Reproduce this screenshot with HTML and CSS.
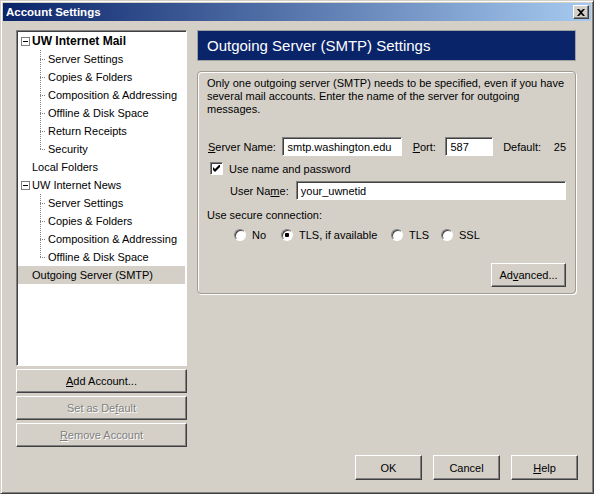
FILE: index.html
```html
<!DOCTYPE html>
<html lang="en">
<head>
    <meta charset="UTF-8">
    <title>Account Settings</title>
    <link rel="stylesheet" href="styles.css">
</head>
<body>

<div class="window">
    <div class="titlebar">
        <span class="title">Account Settings</span>
        <span class="close">
            <svg width="8" height="7" viewBox="0 0 8 7"><path d="M0 0h2l2 2 2-2h2L5 3.5 8 7H6L4 5 2 7H0l3-3.5z" fill="#000"/></svg>
        </span>
    </div>

    <div class="content">
        <div class="main">
            <!-- Account tree and its buttons -->
            <div class="sidebar">
                <div class="tree">
                    <div class="row parent bold"><span class="expander"></span>UW Internet Mail</div>
                    <div class="row child">Server Settings</div>
                    <div class="row child">Copies &amp; Folders</div>
                    <div class="row child">Composition &amp; Addressing</div>
                    <div class="row child">Offline &amp; Disk Space</div>
                    <div class="row child">Return Receipts</div>
                    <div class="row child last">Security</div>
                    <div class="row parent plain">Local Folders</div>
                    <div class="row parent"><span class="expander"></span>UW Internet News</div>
                    <div class="row child">Server Settings</div>
                    <div class="row child">Copies &amp; Folders</div>
                    <div class="row child">Composition &amp; Addressing</div>
                    <div class="row child last">Offline &amp; Disk Space</div>
                    <div class="row parent plain selected">Outgoing Server (SMTP)</div>
                </div>
                <div class="btn side-btn"><u>A</u>dd Account...</div>
                <div class="btn side-btn disabled">Set as De<u>f</u>ault</div>
                <div class="btn side-btn disabled"><u>R</u>emove Account</div>
            </div>

            <!-- Settings page -->
            <div class="panel">
                <div class="panel-header">Outgoing Server (SMTP) Settings</div>
                <div class="group">
                    <p class="description">Only one outgoing server (SMTP) needs to be specified, even if you have several mail accounts. Enter the name of the server for outgoing messages.</p>

                    <div class="form-row server-row">
                        <span class="label server-label"><u>S</u>erver Name:</span>
                        <span class="field server-field">smtp.washington.edu</span>
                        <span class="label port-label"><u>P</u>ort:</span>
                        <span class="field port-field">587</span>
                        <span class="label default-label">Default:</span>
                        <span>25</span>
                    </div>

                    <div class="form-row check-row">
                        <span class="checkbox">
                            <svg width="7" height="7" viewBox="0 0 7 7"><path d="M0 2v3l2 2 5-5V-1L2 4z" fill="#000"/></svg>
                        </span>
                        <span>Use name and password</span>
                    </div>

                    <div class="form-row user-row">
                        <span class="label user-label">User Na<u>m</u>e:</span>
                        <span class="field user-field">your_uwnetid</span>
                    </div>

                    <div class="secure-label">Use secure connection:</div>

                    <div class="form-row radio-row">
                        <span class="radio-item item-no"><span class="radio"></span>No</span>
                        <span class="radio-item item-tlsif"><span class="radio checked"></span>TLS, if available</span>
                        <span class="radio-item item-tls"><span class="radio"></span>TLS</span>
                        <span class="radio-item"><span class="radio"></span>SSL</span>
                    </div>

                    <div class="advanced-row">
                        <div class="btn advanced-btn">Ad<u>v</u>anced...</div>
                    </div>
                </div>
            </div>
        </div>

        <div class="footer">
            <div class="btn footer-btn">OK</div>
            <div class="btn footer-btn">Cancel</div>
            <div class="btn footer-btn"><u>H</u>elp</div>
        </div>
    </div>
</div>

</body>
</html>
```

FILE: styles.css
```css
/* Classic dialog look */
body {
    margin: 0;
    font-family: "Liberation Sans", Arial, sans-serif;
    font-size: 11px;
    color: #000;
    background-color: #d4d0c8;
}
.window {
    width: 594px;
    height: 494px;
    box-sizing: border-box;
    background-color: #d4d0c8;
    border: 1px solid;
    border-color: #d4d0c8 #404040 #404040 #d4d0c8;
    box-shadow: inset 1px 1px #fff, inset -1px -1px #808080;
    padding: 2px;
    display: flex;
    flex-direction: column;
}
.titlebar {
    height: 18px;
    background: linear-gradient(to right, #0a246a, #a6caf0);
    display: flex;
    align-items: center;
    justify-content: space-between;
    padding: 0 2px 0 3px;
}
.title {
    color: #fff;
    font-weight: bold;
    font-size: 11.5px;
}
.close {
    width: 16px;
    height: 14px;
    box-sizing: border-box;
    background-color: #d4d0c8;
    border: 1px solid;
    border-color: #fff #404040 #404040 #fff;
    box-shadow: inset -1px -1px #808080;
    display: flex;
    align-items: center;
    justify-content: center;
}
.content {
    padding: 9px 13px 0 13px;
}
.main {
    display: flex;
    gap: 10px;
}

/* Left column */
.sidebar {
    width: 171px;
    display: flex;
    flex-direction: column;
    gap: 3px;
}
.tree {
    height: 336px;
    box-sizing: border-box;
    background-color: #fff;
    border: 1px solid;
    border-color: #808080 #fff #fff #808080;
    box-shadow: inset 1px 1px #404040;
    padding: 1px 1px 0 1px;
}
.row {
    height: 18px;
    line-height: 18px;
    white-space: nowrap;
}
.parent {
    display: flex;
    align-items: center;
    padding-left: 3px;
}
.bold {
    font-weight: bold;
    font-size: 12px;
}
.plain {
    padding-left: 14px;
}
.selected {
    background-color: #d4d0c8;
}
.expander {
    width: 9px;
    height: 9px;
    box-sizing: border-box;
    border: 1px solid #808080;
    margin-right: 2px;
    background: linear-gradient(#000, #000) center / 5px 1px no-repeat #fff;
}
.child {
    padding-left: 30px;
    background-image:
        repeating-linear-gradient(to bottom, #808080 0 1px, transparent 1px 2px),
        repeating-linear-gradient(to right, #808080 0 1px, transparent 1px 2px);
    background-size: 1px 18px, 6px 1px;
    background-position: 22px 0, 22px 9px;
    background-repeat: no-repeat;
}
.child.last {
    background-size: 1px 10px, 6px 1px;
}

/* Buttons */
.btn {
    height: 24px;
    box-sizing: border-box;
    background-color: #d4d0c8;
    border: 1px solid;
    border-color: #fff #404040 #404040 #fff;
    box-shadow: inset -1px -1px #808080;
    display: flex;
    align-items: center;
    justify-content: center;
    white-space: nowrap;
}
.disabled {
    color: #808080;
    text-shadow: 1px 1px #fff;
}

/* Right column */
.panel {
    width: 379px;
}
.panel-header {
    height: 31px;
    box-sizing: border-box;
    background-color: #0a246a;
    border: 1px solid #a0a0a0;
    color: #fff;
    font-size: 15px;
    display: flex;
    align-items: center;
    padding-left: 9px;
}
.group {
    margin-top: 10px;
    height: 223px;
    box-sizing: border-box;
    border: 1px solid #a09c94;
    border-radius: 4px;
    box-shadow: inset 1px 1px #fff, 1px 1px #fff;
    padding: 5px 9px 0 9px;
}
.description {
    margin: 0;
    line-height: 13px;
}
.form-row {
    display: flex;
    align-items: center;
}
.field {
    height: 19px;
    box-sizing: border-box;
    background-color: #fff;
    border: 1px solid;
    border-color: #808080 #fff #fff #808080;
    box-shadow: inset 1px 1px #404040;
    display: flex;
    align-items: center;
    padding-left: 4px;
    font-size: 11px;
    white-space: nowrap;
    overflow: hidden;
}
.server-row {
    margin-top: 21px;
}
.server-label {
    width: 75px;
    padding-left: 1px;
}
.server-field {
    width: 120px;
}
.port-label {
    width: 33px;
    margin-left: 11px;
}
.port-field {
    width: 48px;
}
.default-label {
    width: 51px;
    margin-left: 10px;
}
.check-row {
    margin-top: 6px;
    height: 13px;
    padding-left: 3px;
}
.checkbox {
    width: 13px;
    height: 13px;
    box-sizing: border-box;
    background-color: #fff;
    border: 1px solid;
    border-color: #808080 #fff #fff #808080;
    box-shadow: inset 1px 1px #404040;
    display: flex;
    align-items: center;
    justify-content: center;
    margin-right: 6px;
}
.user-row {
    margin-top: 6px;
    padding-left: 23px;
}
.user-label {
    width: 66px;
}
.user-field {
    width: 271px;
}
.secure-label {
    margin-top: 9px;
    line-height: 13px;
}
.radio-row {
    margin-top: 6px;
    padding-left: 27px;
    height: 14px;
}
.radio-item {
    display: flex;
    align-items: center;
}
.item-no {
    width: 47px;
}
.item-tlsif {
    width: 110px;
}
.item-tls {
    width: 50px;
}
.radio {
    width: 12px;
    height: 12px;
    box-sizing: border-box;
    border-radius: 50%;
    background-color: #fff;
    border: 1px solid;
    border-color: #808080 #fff #fff #808080;
    box-shadow: inset 1px 1px #404040;
    margin-right: 6px;
}
.radio.checked {
    background: radial-gradient(circle, #000 0 2px, #fff 2.5px);
}
.advanced-row {
    display: flex;
    justify-content: flex-end;
    margin-top: 21px;
}
.advanced-btn {
    width: 75px;
}

/* Bottom buttons */
.footer {
    display: flex;
    justify-content: flex-end;
    gap: 11px;
    margin-top: 8px;
}
.footer-btn {
    width: 67px;
    height: 25px;
}
```
